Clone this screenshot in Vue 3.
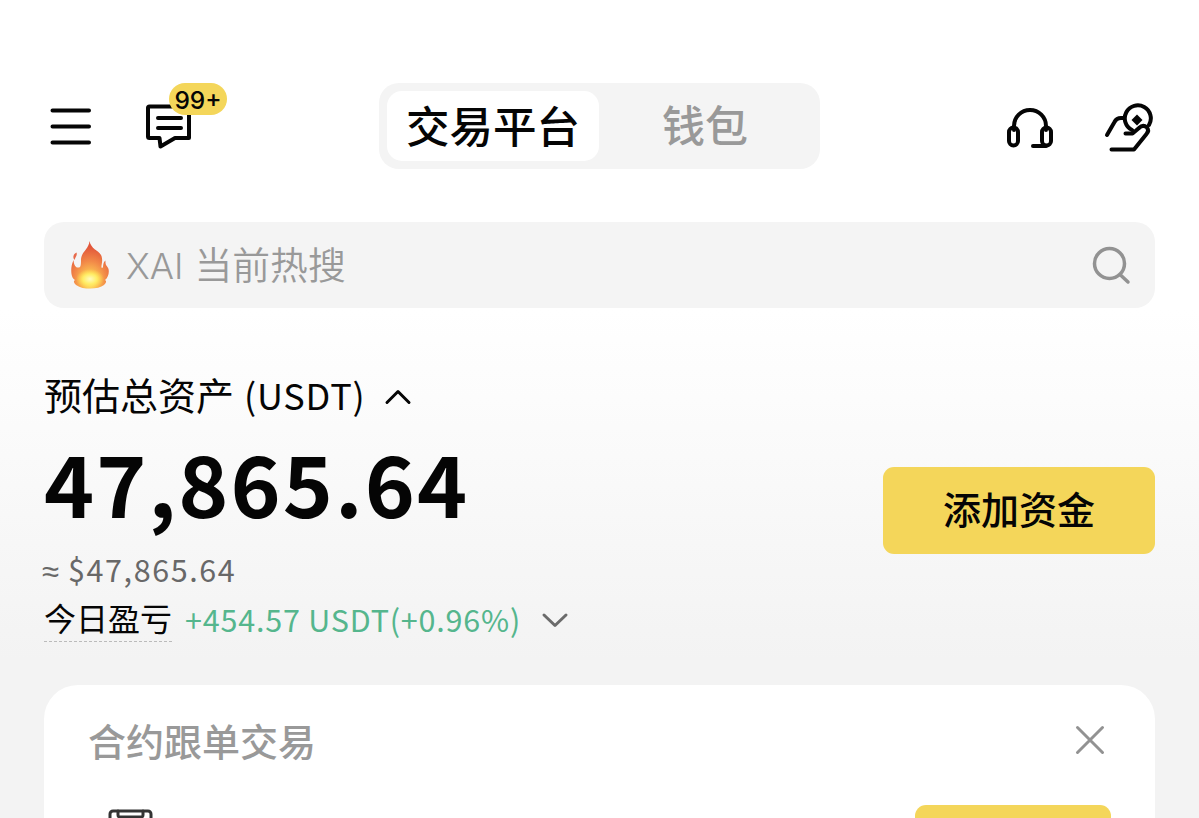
<script setup>
import { ref } from "vue";

const tabs = ["交易平台", "钱包"];
const activeTab = ref(0);
const showCard = ref(true);
const balance = "47,865.64";
</script>

<template>
  <div class="page">
    <header class="header">
      <div class="header-left">
        <svg class="menu" width="44" height="42" viewBox="0 0 44 42">
          <path d="M3.500 5.500H40M3.500 21.500H40M3.500 37.500H40" />
        </svg>
        <div class="message">
          <svg width="50" height="50" viewBox="0 0 50 50">
            <path d="M4 7Q4 5.500 5.500 5.500H45V37H31L16.500 45.500L15.500 37H5.500Q4 37 4 35.500Z" />
            <path d="M14 17H37M14 27H37" />
          </svg>
          <span class="badge">99+</span>
        </div>
      </div>

      <nav class="tabs">
        <button
          v-for="(tab, index) in tabs"
          :key="tab"
          class="tab"
          :class="{ active: index === activeTab }"
          @click="activeTab = index"
        >
          {{ tab }}
        </button>
      </nav>

      <div class="header-right">
        <!-- headset -->
        <svg width="50" height="46" viewBox="0 0 50 46">
          <path d="M9 22V18A16 16 0 0 1 41 18V22" />
          <rect x="4" y="19.500" width="9" height="18" rx="4.500" />
          <rect x="37" y="19.500" width="9" height="18" rx="4.500" />
          <path d="M41 38H28" />
        </svg>
        <!-- hand holding a coin -->
        <svg width="52" height="52" viewBox="0 0 52 52">
          <path d="M4 32L11.500 19Q13.500 15 18 15H21" />
          <path d="M29 27A13 13 0 1 1 46 22" />
          <path class="solid" d="M34 11.500L39.500 17L34 22.500L28.500 17Z" />
          <path d="M22.500 30.500H29.500L36 25Q40 21 44 24.500Q46.500 27.500 43.500 31L31 46.500H8.500" />
        </svg>
      </div>
    </header>

    <div class="search">
      <svg class="fire" width="40" height="50" viewBox="0 0 40 50">
        <defs>
          <radialGradient id="flame" cx="0.5" cy="0.85" r="0.85">
            <stop offset="0" stop-color="#fff27a" />
            <stop offset="0.22" stop-color="#fcc153" />
            <stop offset="0.5" stop-color="#f28a48" />
            <stop offset="0.85" stop-color="#e2563a" />
          </radialGradient>
          <radialGradient id="glow">
            <stop offset="0" stop-color="#fffbc0" />
            <stop offset="0.5" stop-color="#ffed65" />
            <stop offset="1" stop-color="#ffd94d" stop-opacity="0" />
          </radialGradient>
        </defs>
        <path
          fill="url(#flame)"
          d="M19.500 1C19 9 11 12 11 20C11 24 11 27 9 27.500C6 28 4 26 3.500 20C1 26 1 30 1.500 34C2 37 3 39 5 40C3 41 4 43 6 45C10 48 15 48.500 20 48.500C26 48.500 31 47.500 34 45C36 43 37 41 35 40C38 38 39.500 33 38.500 29C37.500 26 35 26 35.500 20.500C32 23 34 28 32 28C30 27 34 21 31 15C28 10 21 9 19.500 1Z"
        />
        <path fill="#e7694a" d="M6.500 12.500C7.500 15 5.500 17 4.500 20C2.500 18 3 14 6.500 12.500Z" />
        <ellipse cx="20" cy="39" rx="14" ry="10" fill="url(#glow)" />
      </svg>
      <span class="keyword"><span class="symbol">XAI</span>当前热搜</span>
      <svg class="magnifier" width="42" height="42" viewBox="0 0 42 42">
        <circle cx="18.500" cy="19.500" r="15" />
        <path d="M29.500 31L37 38" />
      </svg>
    </div>

    <section class="assets">
      <div>
        <div class="assets-title">
          <span>预估总资产</span>
          <span class="unit">(USDT)</span>
          <svg width="28" height="18" viewBox="0 0 28 18">
            <path d="M3 15.500L14 4.500L25 15.500" />
          </svg>
        </div>
        <div class="balance">{{ balance }}</div>
        <div class="fiat"><span class="approx">≈</span>${{ balance }}</div>
        <div class="pnl">
          <span class="pnl-label">今日盈亏</span>
          <span class="pnl-value">+454.57 USDT(+0.96%)</span>
          <svg width="28" height="18" viewBox="0 0 28 18">
            <path d="M3 4L14 14.500L25 4" />
          </svg>
        </div>
      </div>
      <button class="add">添加资金</button>
    </section>

    <section v-if="showCard" class="card">
      <div class="card-head">
        <h3>合约跟单交易</h3>
        <svg width="32" height="32" viewBox="0 0 32 32" @click="showCard = false">
          <path d="M3.500 3.500L28.500 28.500M28.500 3.500L3.500 28.500" />
        </svg>
      </div>
      <div class="card-row">
        <svg width="46" height="46" viewBox="0 0 46 46">
          <rect x="2" y="2" width="41" height="42" rx="3" />
          <path d="M10 2V6Q10 8 12 8H33Q35 8 35 6V2" />
        </svg>
        <div class="card-action"></div>
      </div>
    </section>
  </div>
</template>

<style>
body {
  margin: 0;
  overflow: hidden;
}
</style>

<style scoped>
.page {
  box-sizing: border-box;
  height: 818px;
  padding: 83px 44px 0;
  overflow: hidden;
  background: linear-gradient(#fff 310px, #f3f3f3 660px);
  color: #050505;
  font-family: "Noto Sans CJK SC", sans-serif;
}

svg {
  display: block;
  flex: none;
  fill: none;
  stroke-linecap: round;
  stroke-linejoin: round;
}

button {
  border: 0;
  padding: 0;
  font-family: inherit;
  color: inherit;
}

.header {
  display: flex;
  justify-content: space-between;
  height: 86px;
}

.header-left,
.header-right {
  display: flex;
  flex: none;
  stroke: #050505;
  stroke-width: 4;
}

.header-left {
  width: 335px;
}

.menu {
  margin: 22px 0 0 5px;
}

.message {
  position: relative;
  margin: 18px 0 0 51px;
}

.badge {
  position: absolute;
  left: 25px;
  top: -18px;
  width: 58px;
  height: 32px;
  border-radius: 16px;
  background: #f4d65a;
  font: 450 24.5px/34px Inter, sans-serif;
  text-align: center;
}

.tabs {
  box-sizing: border-box;
  display: flex;
  width: 441px;
  padding: 8px;
  border-radius: 20px;
  background: #f4f4f4;
}

.tab {
  width: 212px;
  height: 70px;
  padding-bottom: 6px;
  border-radius: 15px;
  background: none;
  color: #999;
  font-size: 43px;
  font-weight: 500;
  line-height: 64px;
}

.tab.active {
  padding-bottom: 3px;
  background: #fff;
  color: #050505;
  font-size: 43.5px;
}

.header-right {
  width: 335px;
  justify-content: flex-end;
  gap: 48px;
}

.header-right svg:first-child {
  margin-top: 25px;
}

.header-right svg:last-child {
  margin-top: 20px;
}

.header-right .solid {
  fill: #050505;
  stroke: none;
}

.search {
  display: flex;
  align-items: center;
  height: 86px;
  margin-top: 53px;
  padding: 0 22px 0 26px;
  border-radius: 20px;
  background: #f4f4f4;
}

.keyword {
  flex: 1;
  margin-left: 16px;
  padding-bottom: 5px;
  color: #999;
  font-size: 37.8px;
  font-weight: 350;
}

.symbol {
  margin-right: 11px;
  font-family: Inter, sans-serif;
  font-size: 36px;
  font-weight: 360;
}

.magnifier {
  stroke: #929292;
  stroke-width: 3.5;
}

.assets {
  display: flex;
  justify-content: space-between;
  height: 377px;
}

.assets-title {
  display: flex;
  align-items: center;
  height: 56px;
  margin-top: 60px;
  font-size: 38px;
}

.assets-title span {
  padding-bottom: 5px;
}

.assets-title svg {
  margin-left: 18px;
  stroke: #050505;
  stroke-width: 3;
}

.assets-title .unit {
  margin-left: 10px;
  font-size: 36px;
  letter-spacing: 0.8px;
}

.balance {
  height: 104px;
  font-size: 85px;
  font-weight: 700;
  line-height: 113px;
  letter-spacing: 2.1px;
}

.fiat {
  height: 46px;
  margin-top: 18px;
  color: #686868;
  font-size: 30.5px;
  line-height: 46px;
  letter-spacing: 1.6px;
}

.approx {
  display: inline-block;
  width: 24px;
  margin-left: -2px;
  margin-right: 2px;
  font-family: "Liberation Sans", sans-serif;
  font-size: 31px;
}

.pnl {
  display: flex;
  align-items: center;
  height: 44px;
  margin-top: 6px;
}

.pnl-label {
  height: 42px;
  border-bottom: 1px dashed #bbb;
  font-size: 32px;
  line-height: 37px;
}

.pnl-value {
  margin-left: 13px;
  padding-bottom: 2px;
  color: #55b68d;
  font-size: 30.5px;
  letter-spacing: 0.8px;
}

.pnl svg {
  margin-left: 20px;
  stroke: #6b6b6b;
  stroke-width: 3;
}

.add {
  width: 272px;
  height: 87px;
  margin-top: 159px;
  padding-bottom: 7px;
  border-radius: 11px;
  background: #f4d65a;
  font-size: 38px;
  font-weight: 500;
}

.card {
  height: 180px;
  padding: 0 44px;
  border-radius: 34px;
  background: #fff;
}

.card-head {
  display: flex;
  align-items: center;
  justify-content: space-between;
  height: 120px;
}

.card-head h3 {
  margin: 0;
  padding-bottom: 11px;
  color: #999;
  font-size: 38px;
  font-weight: 500;
}

.card-head svg {
  margin: 0 5px 10px 0;
  stroke: #929292;
  stroke-width: 3;
}

.card-row {
  display: flex;
  justify-content: space-between;
  padding-left: 20px;
}

.card-row svg {
  margin-top: 4px;
  stroke: #333;
  stroke-width: 3;
}

.card-action {
  width: 196px;
  height: 60px;
  border-radius: 11px;
  background: #f4d65a;
}
</style>
